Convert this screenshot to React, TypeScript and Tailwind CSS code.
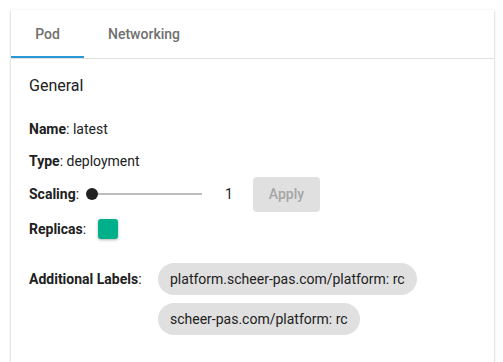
export default function App() {
  return (
    <div className="min-h-[362px] bg-white pl-[11px] pr-[9px] pt-[10px] font-['Roboto',sans-serif] text-[14px] text-[#212121]">
      <div className="min-h-[360px] bg-white shadow-[0_1px_3px_rgba(0,0,0,0.2),0_1px_1px_rgba(0,0,0,0.14)]">
        <div className="flex h-[49px] border-b border-[#e0e0e0]">
          <div className="relative flex w-[73px] items-center justify-center text-[14px] font-medium text-[#6f6f6f]">
            Pod
            <span className="absolute bottom-0 left-0 h-[2px] w-full bg-[#2a98d4]" />
          </div>
          <div className="flex w-[120px] items-center justify-center text-[14px] font-medium text-[#6f6f6f]">
            Networking
          </div>
        </div>

        <div className="pl-[18px] pt-[15px]">
          <h2 className="text-[16px] leading-[24px] text-[#212121]">General</h2>

          <div className="mt-[21px] leading-[20px]">
            <b className="font-bold">Name</b>: latest
          </div>
          <div className="mt-[12px] leading-[20px]">
            <b className="font-bold">Type</b>: deployment
          </div>

          <div className="mt-[5px] flex h-[36px] items-center">
            <span>
              <b className="font-bold">Scaling</b>:
            </span>
            <div className="relative ml-[7px] h-[12px] w-[116px]">
              <div className="absolute left-[2px] right-0 top-[5px] h-[2px] bg-[#bdbdbd]" />
              <div className="absolute left-0 top-0 h-[12px] w-[12px] rounded-full bg-[#212121]" />
            </div>
            <span className="ml-[23px]">1</span>
            <button className="ml-[20px] h-[35px] w-[67px] rounded-[4px] bg-[#e0e0e0] text-[14px] font-medium text-[#a6a6a6]">
              Apply
            </button>
          </div>

          <div className="mt-[7px] flex h-[20px] items-center">
            <span>
              <b className="font-bold">Replicas</b>:
            </span>
            <span className="ml-[12px] h-[20px] w-[20px] rounded-[3px] bg-[#00b08a] shadow-[0_1px_3px_rgba(0,0,0,0.3)]" />
          </div>

          <div className="mt-[24px] flex">
            <span className="mt-[6px] w-[129px] leading-[20px]">
              <b className="font-bold">Additional Labels</b>:
            </span>
            <div className="flex flex-col items-start gap-[8px]">
              <span className="flex h-[32px] items-center rounded-full bg-[#e0e0e0] px-[12px] text-[14px]">
                platform.scheer-pas.com/platform: rc
              </span>
              <span className="flex h-[32px] items-center rounded-full bg-[#e0e0e0] px-[12px] text-[14px]">
                scheer-pas.com/platform: rc
              </span>
            </div>
          </div>
        </div>
      </div>
    </div>
  );
}
